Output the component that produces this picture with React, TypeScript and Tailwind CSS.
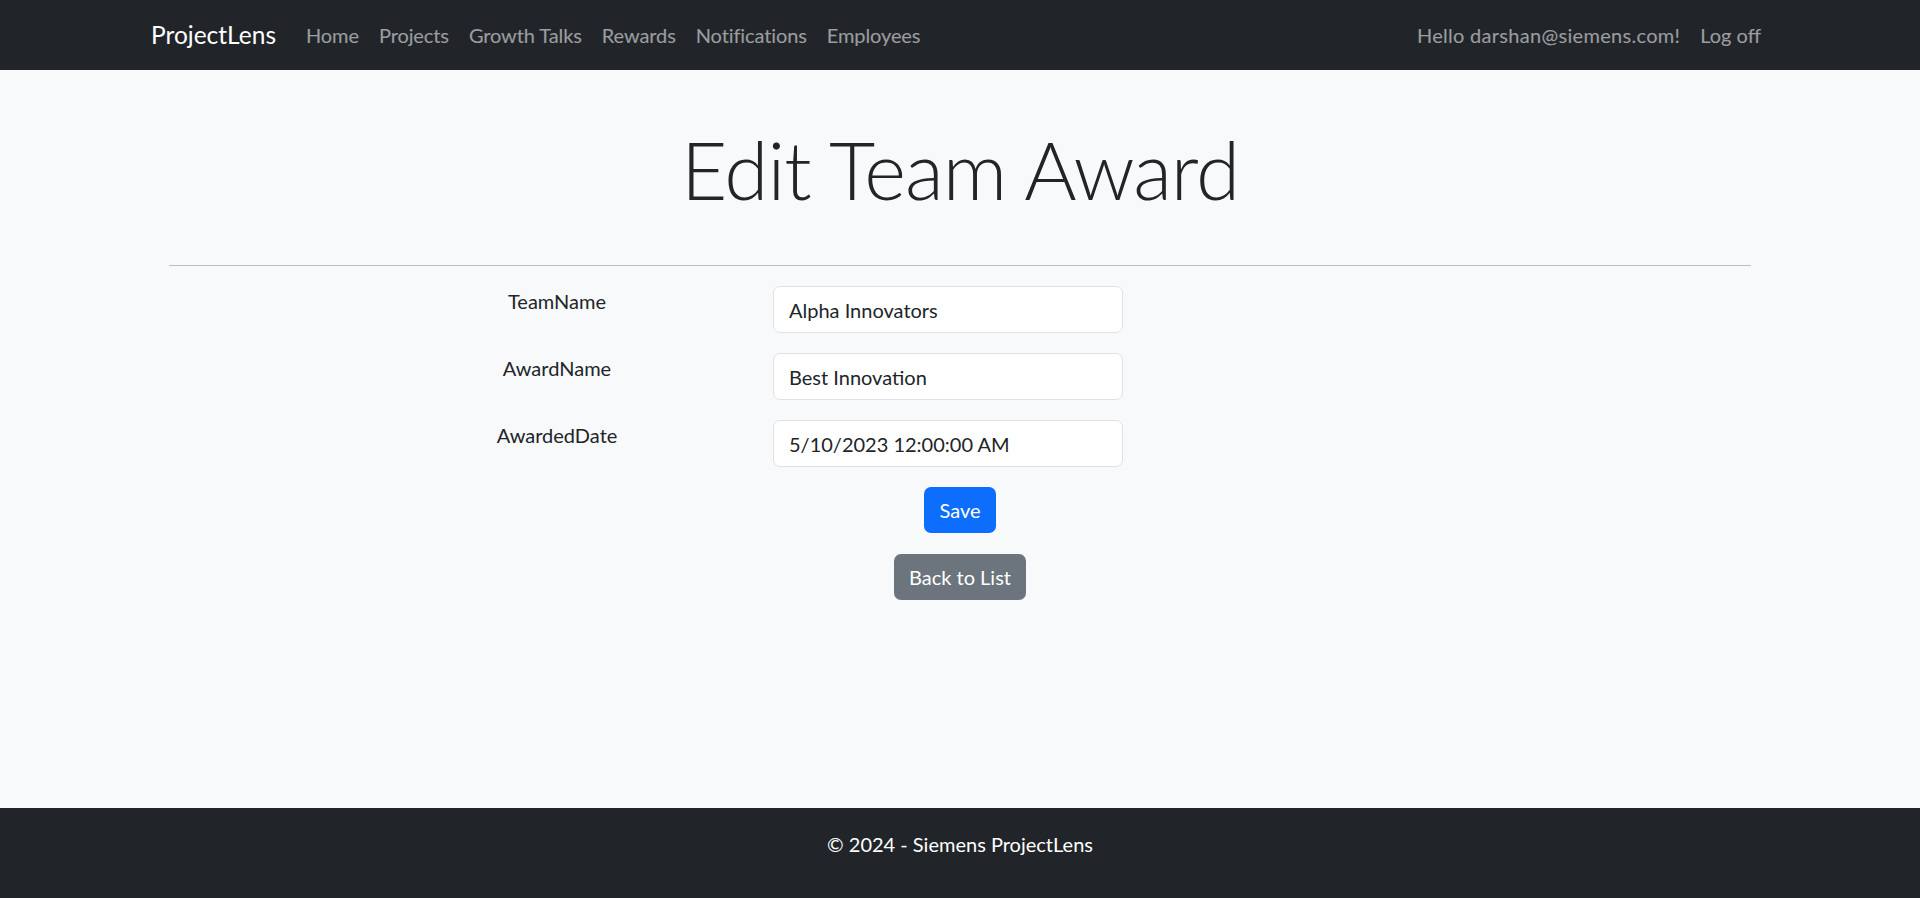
import React from 'react'

const font = { fontFamily: 'Lato, "Open Sans", sans-serif' }

const navLinks = ['Home', 'Projects', 'Growth Talks', 'Rewards', 'Notifications', 'Employees']

const fields = [
  { label: 'TeamName', value: 'Alpha Innovators' },
  { label: 'AwardName', value: 'Best Innovation' },
  { label: 'AwardedDate', value: '5/10/2023 12:00:00 AM' },
]

function Navbar() {
  return (
    <nav className="flex h-[70px] items-center justify-between bg-[#212529] pl-[151px] pr-[159px]">
      <div className="flex items-center">
        <span className="mr-[20px] text-[24.5px] leading-[30px] text-white">ProjectLens</span>
        {navLinks.map((l) => (
          <a key={l} className="px-[10px] text-[20px] leading-[30px] tracking-[-0.1px] text-white/55">
            {l}
          </a>
        ))}
      </div>
      <div className="flex items-center gap-[20px] text-[20px] leading-[30px] text-white/55">
        <span className="tracking-[0.3px]">Hello darshan@siemens.com!</span>
        <a>Log off</a>
      </div>
    </nav>
  )
}

function FormRow({ label, value }: { label: string; value: string }) {
  return (
    <div className="mb-[20px] flex items-start">
      {/* label column */}
      <div className="ml-[243px] w-[290px] text-center text-[20px] leading-[30px] text-[#212529]">
        {label}
      </div>
      <input
        readOnly
        value={value}
        style={font}
        className="ml-[71px] h-[47px] w-[350px] rounded-[7px] border border-[#dee2e6] bg-white px-[15px] text-[20px] text-[#212529] outline-none"
      />
    </div>
  )
}

export default function App() {
  return (
    <div style={font} className="flex min-h-[898px] flex-col bg-[#f8f9fa] text-[#212529]">
      <Navbar />
      <main className="flex-1 px-[169px]">
        <h1 className="mt-[51px] text-center text-[80px] font-light leading-[96px] tracking-[-1px]">Edit Team Award</h1>
        <hr className="mt-[48px] border-t border-[#bdbebf]" />
        <div className="mt-[20px]">
          {fields.map((f) => (
            <FormRow key={f.label} {...f} />
          ))}
        </div>
        <div className="flex flex-col items-center">
          <button className="h-[46px] rounded-[7px] bg-[#0d6efd] px-[15px] text-[20px] text-white">Save</button>
          <button className="mt-[21px] h-[46px] rounded-[7px] bg-[#6c757d] px-[15px] text-[20px] text-white">
            Back to List
          </button>
        </div>
      </main>
      <footer className="h-[90px] bg-[#212529] pt-[21px] text-center text-[20px] leading-[30px] text-white">
        © 2024 - Siemens ProjectLens
      </footer>
    </div>
  )
}
